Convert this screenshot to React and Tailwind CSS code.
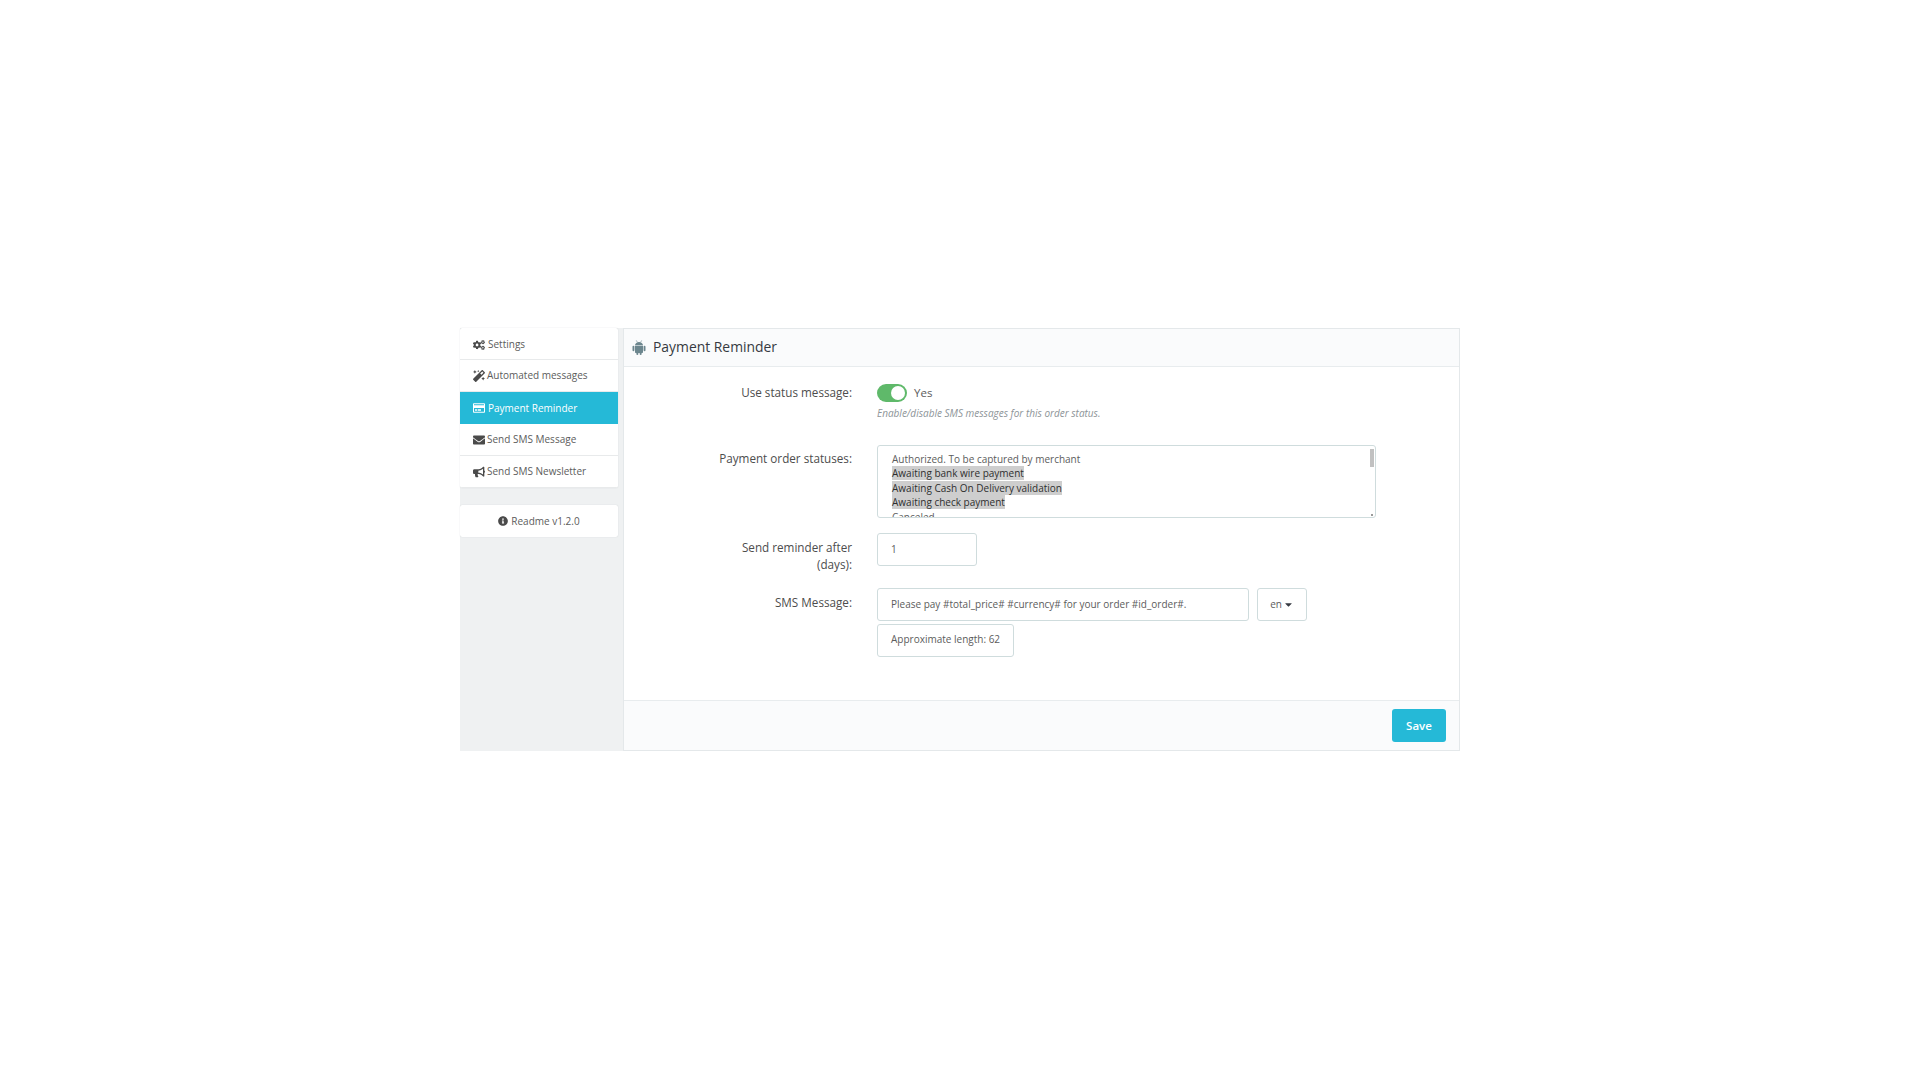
import { FaCogs, FaMagic, FaRegCreditCard, FaEnvelope, FaBullhorn, FaInfoCircle, FaCaretDown } from 'react-icons/fa';

const navItems = [
  { label: 'Settings', icon: FaCogs, gap: 'gap-[3px]' },
  { label: 'Automated messages', icon: FaMagic, gap: 'gap-[2px]' },
  { label: 'Payment Reminder', icon: FaRegCreditCard, gap: 'gap-[3px]', active: true },
  { label: 'Send SMS Message', icon: FaEnvelope, gap: 'gap-[2px]' },
  { label: 'Send SMS Newsletter', icon: FaBullhorn, gap: 'gap-[2px]' },
];

const statuses = [
  { label: 'Authorized. To be captured by merchant' },
  { label: 'Awaiting bank wire payment', selected: true },
  { label: 'Awaiting Cash On Delivery validation', selected: true },
  { label: 'Awaiting check payment', selected: true },
  { label: 'Canceled' },
];

function FormLabel({ children, className = '' }) {
  return (
    <label className={`block w-[228px] shrink-0 text-right text-[11.7px] leading-[17px] text-[#4d4d4d] ${className}`}>
      {children}
    </label>
  );
}

// FA4 style android, the react-icons one only has the head
function AndroidIcon() {
  return (
    <svg viewBox="0 0 14 15" className="h-[15px] w-[14px] shrink-0 fill-[#6c868e]">
      <path d="M3 5.2C3.1 3.4 4.9 2 7 2s3.900 1.400 4 3.200z" />
      <path d="M4.300 0.400l1 1.800M9.700 0.400l-1 1.800" stroke="#6c868e" strokeWidth="0.6" />
      <path d="M3 5.800h8v6.200c0 .6-.4 1-1 1H4c-.6 0-1-.4-1-1z" />
      <rect x="0.500" y="5.800" width="1.900" height="5.400" rx="0.950" />
      <rect x="11.600" y="5.800" width="1.900" height="5.400" rx="0.950" />
      <rect x="4.400" y="12" width="1.900" height="3" rx="0.950" />
      <rect x="7.700" y="12" width="1.900" height="3" rx="0.950" />
    </svg>
  );
}

export default function App() {
  return (
    <div className="min-h-[1080px] bg-white pt-[328px] font-['Open_Sans',sans-serif]">
      <div className="mx-auto flex h-[423px] w-[1000px] bg-[#eff1f2]">
        <aside className="w-[163px] shrink-0 pr-[5px]">
          <nav className="flex flex-col overflow-hidden rounded-[2px] bg-white shadow-[0_0_1px_#bfc4c6]">
            {navItems.map((item, i) => (
              <div
                key={item.label}
                className={`flex h-[32px] items-center ${item.gap} pl-[13px] text-[10px] ${i === 0 ? 'pt-[2px]' : ''} ${
                  item.active ? 'bg-[#25b9d7] text-white' : 'border-b border-[#e8eaeb] text-[#5c5c5c]'
                }`}
              >
                <item.icon className={`size-[12px] shrink-0 ${item.active ? 'text-white' : 'text-[#4a4a4a]'}`} />
                <span>{item.label}</span>
              </div>
            ))}
          </nav>
          <div className="mt-[17px] flex h-[32px] items-center justify-center gap-[3px] rounded-[2px] bg-white text-[10px] text-[#5c5c5c] shadow-[0_0_1px_#bfc4c6]">
            <FaInfoCircle className="size-[10px] text-[#4a4a4a]" />
            <span>Readme v1.2.0</span>
          </div>
        </aside>

        <main className="flex min-w-0 flex-1 flex-col border border-[#e4e8ea] bg-white">
          <header className="flex h-[38px] shrink-0 items-center gap-[7px] border-b border-[#e8ecee] bg-[#fafbfc] pl-[8px]">
            <AndroidIcon />
            <h1 className="text-[13.9px] font-medium text-[#363a41]">Payment Reminder</h1>
          </header>

          <div className="flex flex-1 flex-col pt-[17px]">
            <div className="flex">
              <FormLabel>Use status message:</FormLabel>
              <div className="ml-[25px]">
                <div className="flex items-center gap-[7px]">
                  <span className="relative h-[18px] w-[30px] rounded-full bg-[#5fb96a]">
                    <span className="absolute right-[2px] top-[2px] size-[14px] rounded-full bg-white" />
                  </span>
                  <span className="text-[11.5px] text-[#5c5c5c]">Yes</span>
                </div>
                <p className="mt-[3px] text-[10px] italic leading-[17px] text-[#8d9498]">
                  Enable/disable SMS messages for this order status.
                </p>
              </div>
            </div>

            <div className="mt-[23px] flex">
              <FormLabel className="pt-[5px]">Payment order statuses:</FormLabel>
              <div className="relative ml-[25px] h-[73px] w-[499px] overflow-hidden rounded-[3px] border border-[#cfdcdd] pl-[14px] pt-[6px] text-[10px] leading-[14.4px] text-[#5c5c5c]">
                {statuses.map((s) => (
                  <div key={s.label}>
                    <span className={s.selected ? 'bg-[#cecece] text-[#2e2e2e]' : ''}>{s.label}</span>
                  </div>
                ))}
                <span className="absolute right-[1px] top-[3px] h-[18px] w-[4px] bg-[#c1c1c1]" />
                <span className="absolute bottom-[1px] right-[2px] size-[2px] bg-[#9a9a9a]" />
              </div>
            </div>

            <div className="mt-[15px] flex">
              <FormLabel className="pt-[6px]">
                Send reminder after
                <br />
                (days):
              </FormLabel>
              <div className="ml-[25px] flex h-[33px] w-[100px] items-center rounded-[3px] border border-[#cfdcdd] pl-[13px] text-[10px] text-[#5c5c5c]">
                1
              </div>
            </div>

            <div className="mt-[15px] flex">
              <FormLabel className="pt-[6px]">SMS Message:</FormLabel>
              <div className="ml-[25px]">
                <div className="flex gap-[8px]">
                  <div className="flex h-[33px] w-[372px] items-center rounded-[3px] border border-[#cfdcdd] pl-[13px] text-[10px] text-[#5c5c5c]">
                    Please pay #total_price# #currency# for your order #id_order#.
                  </div>
                  <div className="flex h-[33px] w-[50px] items-center justify-center gap-px rounded-[3px] border border-[#cfdcdd] text-[10px] text-[#5c5c5c]">
                    en
                    <FaCaretDown className="size-[11px] text-[#363a41]" />
                  </div>
                </div>
                <div className="mt-[3px] flex h-[33px] w-[137px] items-center rounded-[3px] border border-[#cfdcdd] pb-[2px] pl-[13px] text-[10px] text-[#5c5c5c]">
                  Approximate length: 62
                </div>
              </div>
            </div>
          </div>

          <footer className="flex h-[50px] shrink-0 items-center justify-end border-t border-[#e8ecee] bg-[#fafbfc] pr-[13px]">
            <button className="h-[33px] w-[54px] rounded-[3px] bg-[#25b9d7] text-[11.5px] font-semibold text-white">Save</button>
          </footer>
        </main>
      </div>
    </div>
  );
}
